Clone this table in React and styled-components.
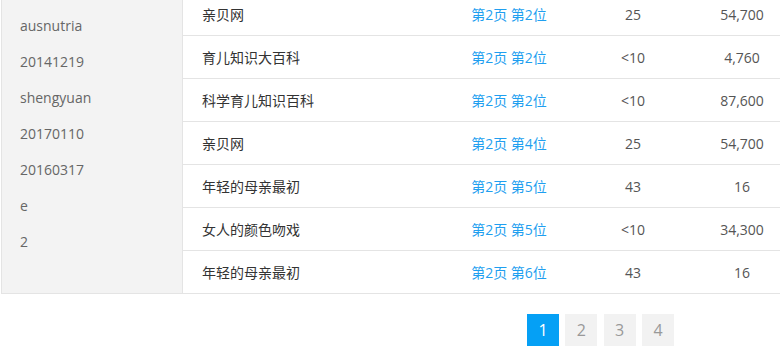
import React from "react";
import styled, { createGlobalStyle } from "styled-components";

const GlobalStyle = createGlobalStyle`
  body {
    margin: 0;
    background: #fff;
    font-family: "Open Sans", "Noto Sans CJK SC", sans-serif;
    font-size: 14px;
  }
`;

const Page = styled.div`
  margin-top: -7px;
  padding-left: 1px;
`;

const Top = styled.div`
  display: flex;
`;

const Sidebar = styled.ul`
  list-style: none;
  margin: 0;
  padding: 15px 0 0 18px;
  width: 162px;
  background: #f3f3f3;
  border: 1px solid #e4e4e4;
  border-top: none;
`;

const SideItem = styled.li`
  line-height: 36px;
  color: #666;
`;

const Table = styled.div`
  flex: 1;
`;

const Row = styled.div`
  display: grid;
  grid-template-columns: 273px 106px 142px 1fr;
  height: 42px;
  align-items: center;
  border-bottom: 1px solid #e4e4e4;
`;

const Cell = styled.div`
  color: ${(p) => (p.link ? "#1f9ff0" : p.num ? "#555" : "#333")};
  text-align: ${(p) => (p.left ? "left" : "center")};
  padding-left: ${(p) => (p.left ? "19px" : "0")};
  white-space: nowrap;
`;

const Pager = styled.div`
  display: flex;
  gap: 6.33px;
  margin-top: 20px;
  padding-left: 526px;
`;

const PageBtn = styled.span`
  width: 32px;
  height: 32px;
  display: flex;
  align-items: center;
  justify-content: center;
  font-size: 16px;
  background: ${(p) => (p.active ? "#05a0f5" : "#f2f2f2")};
  color: ${(p) => (p.active ? "#fff" : "#999")};
`;

const side = ["ausnutria", "20141219", "shengyuan", "20170110", "20160317", "e", "2"];

const rows = [
  ["亲贝网", "第2页 第2位", "25", "54,700"],
  ["育儿知识大百科", "第2页 第2位", "<10", "4,760"],
  ["科学育儿知识百科", "第2页 第2位", "<10", "87,600"],
  ["亲贝网", "第2页 第4位", "25", "54,700"],
  ["年轻的母亲最初", "第2页 第5位", "43", "16"],
  ["女人的颜色吻戏", "第2页 第5位", "<10", "34,300"],
  ["年轻的母亲最初", "第2页 第6位", "43", "16"],
];

export default function App() {
  return (
    <Page>
      <GlobalStyle />
      <Top>
        <Sidebar>
          {side.map((s, i) => (
            <SideItem key={i}>{s}</SideItem>
          ))}
        </Sidebar>
        <Table>
          {rows.map((r, i) => (
            <Row key={i}>
              <Cell left>{r[0]}</Cell>
              <Cell link>{r[1]}</Cell>
              <Cell num>{r[2]}</Cell>
              <Cell num>{r[3]}</Cell>
            </Row>
          ))}
        </Table>
      </Top>
      <Pager>
        {[1, 2, 3, 4].map((n) => (
          <PageBtn key={n} active={n === 1}>
            {n}
          </PageBtn>
        ))}
      </Pager>
    </Page>
  );
}
